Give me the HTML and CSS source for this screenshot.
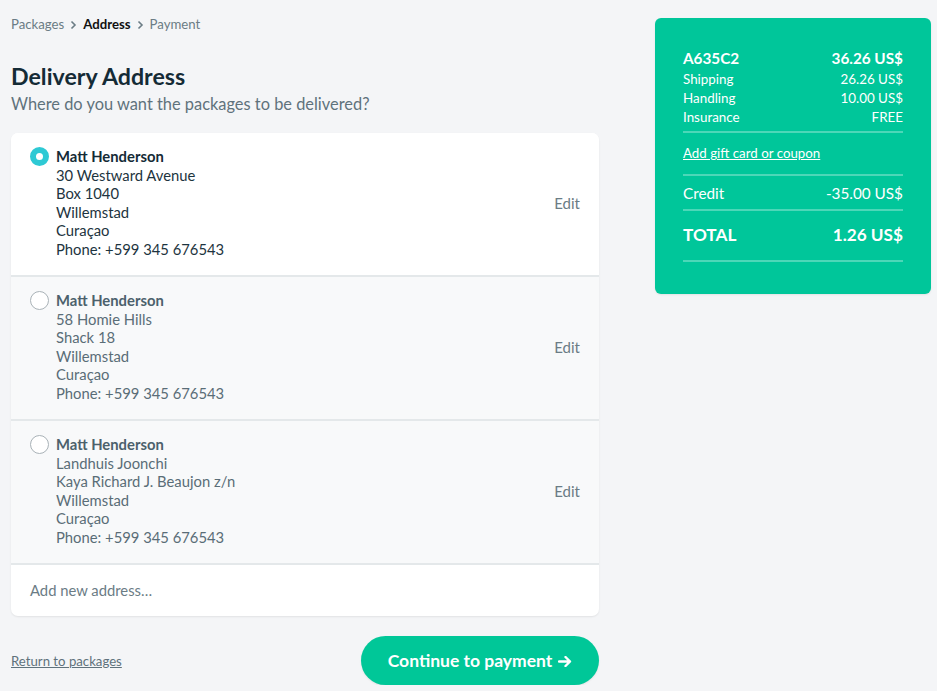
FILE: index.html
```html
<!DOCTYPE html>
<html>
<head>
<meta charset="utf-8">
<link rel="stylesheet" href="styles.css">
</head>
<body>
<div class="page">
  <main class="main">
    <nav class="crumbs">
      <span class="crumb">Packages</span>
      <svg class="chev" width="7" height="10" viewBox="0 0 7 10"><path d="M1.5 1.5 L5 5 L1.5 8.5" fill="none" stroke="#6b7c85" stroke-width="1.6"/></svg>
      <span class="crumb current">Address</span>
      <svg class="chev" width="7" height="10" viewBox="0 0 7 10"><path d="M1.5 1.5 L5 5 L1.5 8.5" fill="none" stroke="#6b7c85" stroke-width="1.6"/></svg>
      <span class="crumb">Payment</span>
    </nav>
    <h1 class="title">Delivery Address</h1>
    <p class="subtitle">Where do you want the packages to be delivered?</p>

    <div class="card">
      <div class="addr selected">
        <span class="radio on"></span>
        <div class="lines">
          <div class="name">Matt Henderson</div>
          <div>30 Westward Avenue</div>
          <div>Box 1040</div>
          <div>Willemstad</div>
          <div>Curaçao</div>
          <div>Phone: +599 345 676543</div>
        </div>
        <span class="edit">Edit</span>
      </div>
      <div class="addr">
        <span class="radio"></span>
        <div class="lines">
          <div class="name">Matt Henderson</div>
          <div>58 Homie Hills</div>
          <div>Shack 18</div>
          <div>Willemstad</div>
          <div>Curaçao</div>
          <div>Phone: +599 345 676543</div>
        </div>
        <span class="edit">Edit</span>
      </div>
      <div class="addr">
        <span class="radio"></span>
        <div class="lines">
          <div class="name">Matt Henderson</div>
          <div>Landhuis Joonchi</div>
          <div>Kaya Richard J. Beaujon z/n</div>
          <div>Willemstad</div>
          <div>Curaçao</div>
          <div>Phone: +599 345 676543</div>
        </div>
        <span class="edit">Edit</span>
      </div>
      <div class="add-new">Add new address…</div>
    </div>

    <div class="actions">
      <a class="back" href="#">Return to packages</a>
      <button class="continue">Continue to payment<svg class="arrow" width="14" height="11" viewBox="0 0 14 11"><path d="M1 5.5 H12 M7.5 1 L12 5.5 L7.5 10" fill="none" stroke="#fff" stroke-width="2.4" stroke-linecap="round" stroke-linejoin="round"/></svg></button>
    </div>
  </main>

  <aside class="summary">
    <div class="row head"><span>A635C2</span><span>36.26 US$</span></div>
    <div class="row"><span>Shipping</span><span>26.26 US$</span></div>
    <div class="row"><span>Handling</span><span>10.00 US$</span></div>
    <div class="row"><span>Insurance</span><span>FREE</span></div>
    <hr class="div d1">
    <a class="coupon" href="#">Add gift card or coupon</a>
    <hr class="div d2">
    <div class="row credit"><span>Credit</span><span>-35.00 US$</span></div>
    <hr class="div d3">
    <div class="row total"><span>TOTAL</span><span>1.26 US$</span></div>
    <hr class="div d4">
  </aside>
</div>
</body>
</html>
```

FILE: styles.css
```css
* { box-sizing: border-box; }
html, body {
  margin: 0;
  padding: 0;
  background: #f4f5f7;
  font-family: Lato, "Open Sans", sans-serif;
  color: #1d3440;
}
.page {
  display: flex;
  align-items: flex-start;
  gap: 56px;
  padding: 0 6px 0 11px;
}
.main {
  width: 588px;
  padding-top: 14px;
}
.crumbs {
  display: flex;
  align-items: center;
  gap: 6px;
  height: 20px;
  font-size: 13.2px;
  color: #6b7c85;
}
.chev { display: block; margin-top: 1px; }
.crumb.current { color: #111; font-weight: 700; }
.title {
  margin: 27px 0 0;
  font-size: 23.2px;
  line-height: 30px;
  font-weight: 700;
  color: #142b36;
}
.subtitle {
  margin: 1px 0 0;
  font-size: 16.4px;
  line-height: 24px;
  color: #5f727c;
}
.card {
  margin-top: 17px;
  background: #fff;
  border-radius: 7px;
  box-shadow: 0 1px 2px rgba(0,0,0,0.08);
  overflow: hidden;
}
.addr {
  display: flex;
  align-items: center;
  padding: 14px 19px 17px;
  background: #f8f9fa;
  border-bottom: 2px solid #e4e8ea;
  color: #5a6d77;
  font-size: 14.8px;
}
.addr.selected { background: #fff; color: #1d3440; }
.radio {
  align-self: flex-start;
  width: 19px;
  height: 19px;
  margin-top: 0;
  border: 1.3px solid #a9b2b7;
  border-radius: 50%;
  background: #fff;
  flex: none;
}
.radio.on {
  border: 6px solid #2ec9d4;
  background: #fff;
}
.lines {
  flex: 1;
  margin-left: 7px;
  line-height: 18.5px;
}
.name { font-weight: 700; color: #4c616c; }
.selected .name { color: #142b36; }
.edit {
  font-size: 15px;
  color: #6b7c85;
}
.add-new {
  height: 51px;
  line-height: 51px;
  padding: 0 19px;
  font-size: 14.8px;
  color: #6b7c85;
}
.actions {
  display: flex;
  justify-content: space-between;
  align-items: center;
  margin-top: 20px;
}
.back {
  font-size: 13.2px;
  color: #5f727c;
  text-decoration: underline;
}
.continue {
  display: flex;
  align-items: center;
  justify-content: center;
  gap: 6px;
  width: 238px;
  height: 49px;
  border: none;
  border-radius: 25px;
  background: #00c798;
  color: #fff;
  font-family: Lato, sans-serif;
  font-size: 17.5px;
  font-weight: 700;
  padding: 0;
  box-shadow: 0 1px 2px rgba(0,0,0,0.08);
}
.arrow { display: block; margin-top: 1px; }
.summary {
  margin-top: 18px;
  width: 276px;
  padding: 30px 28px 32px;
  background: #00c69a;
  border-radius: 6px;
  color: #fff;
  box-shadow: 0 1px 2px rgba(0,0,0,0.08);
}
.row {
  display: flex;
  justify-content: space-between;
  font-size: 13.4px;
  line-height: 19px;
}
.row.head {
  font-size: 15.3px;
  font-weight: 700;
  line-height: 20px;
  margin-bottom: 2px;
}
.div {
  border: none;
  height: 2px;
  background: rgba(255,255,255,0.3);
  margin: 0;
}
.d1 { margin-top: 4px; }
.coupon {
  display: block;
  margin-top: 10px;
  font-size: 13.3px;
  line-height: 20px;
  color: #fff;
  text-decoration: underline;
}
.d2 { margin-top: 11px; }
.credit {
  margin-top: 7px;
  font-size: 15.3px;
  line-height: 20px;
}
.d3 { margin-top: 6px; }
.total {
  margin-top: 12px;
  font-size: 17.2px;
  font-weight: 700;
  line-height: 24px;
}
.d4 { margin-top: 13px; }
```
